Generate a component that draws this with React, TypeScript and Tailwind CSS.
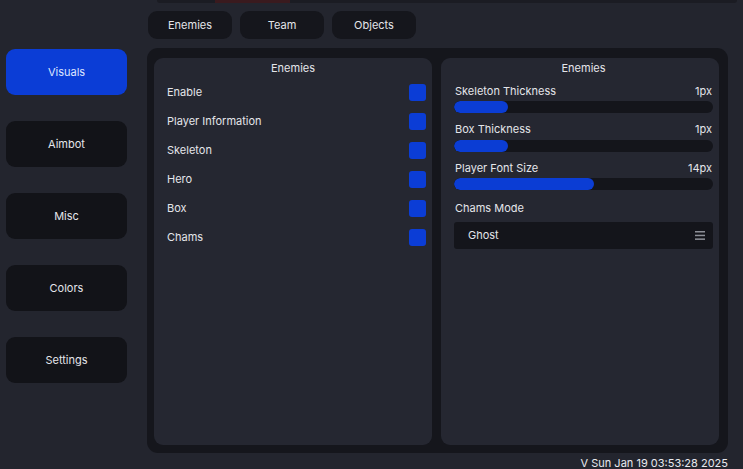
const sideItems = ['Visuals', 'Aimbot', 'Misc', 'Colors', 'Settings'];
const tabs = ['Enemies', 'Team', 'Objects'];
const toggles = ['Enable', 'Player Information', 'Skeleton', 'Hero', 'Box', 'Chams'];
const sliders = [
    { label: 'Skeleton Thickness', value: '1px', pct: 21 },
    { label: 'Box Thickness', value: '1px', pct: 21 },
    { label: 'Player Font Size', value: '14px', pct: 54 },
];

function Slider({ label, value, pct }: { label: string; value: string; pct: number }) {
    return (
        <div className="flex flex-col">
            <div className="flex justify-between items-center h-[16px] px-px">
                <span>{label}</span>
                <span>{value}</span>
            </div>
            <div className="mt-[2px] h-[12px] rounded-full bg-[#14151b] overflow-hidden">
                <div className="h-full rounded-full bg-[#0b3dd4]" style={{ width: `${pct}%` }} />
            </div>
        </div>
    );
}

export default function App() {
    return (
        <div
            className="relative w-[743px] h-[469px] bg-[#23252e] text-[#e4e5ea] text-[11px] overflow-hidden"
            style={{ fontFamily: 'Inter, "Noto Sans", sans-serif' }}
        >
            {/* strip of the window above */}
            <div className="absolute top-0 left-[157px] right-[6px] h-[3px] bg-[#1b1c23] rounded-b-[3px]">
                <div className="ml-[58px] w-[75px] h-full bg-[#3a1a1e]" />
            </div>

            <div className="flex">
                {/* Sidebar */}
                <div className="pl-[6px] pt-[49px] flex flex-col gap-[26px]">
                    {sideItems.map((item, i) => (
                        <div
                            key={item}
                            className={`w-[121px] h-[46px] rounded-[9px] flex items-center justify-center ${
                                i === 0 ? 'bg-[#0b3dd6] text-[#dfe6ff]' : 'bg-[#121318] text-[#e4e5ea]'
                            }`}
                        >
                            {item}
                        </div>
                    ))}
                </div>

                {/* Main */}
                <div className="ml-[20px] flex flex-col">
                    <div className="pt-[11px] pl-px flex gap-[8px]">
                        {tabs.map((tab) => (
                            <div
                                key={tab}
                                className="w-[84px] h-[28px] rounded-[9px] bg-[#15161c] flex items-center justify-center"
                            >
                                {tab}
                            </div>
                        ))}
                    </div>

                    <div className="mt-[9px] w-[581px] h-[405px] rounded-[11px] bg-[#15161c] pt-[10px] pb-[8px] pl-[7px] pr-[9px] flex gap-[9px]">
                        {/* Toggles */}
                        <div className="w-[278px] h-full rounded-[9px] bg-[#252731] flex flex-col">
                            <div className="text-center pt-[2px] h-[19px]">Enemies</div>
                            <div className="flex flex-col mt-[1px]">
                                {toggles.map((t) => (
                                    <div key={t} className="h-[29px] pl-[13px] pr-[6px] flex items-center justify-between">
                                        <span>{t}</span>
                                        <div className="w-[17px] h-[17px] rounded-[3px] bg-[#0b3dd6]" />
                                    </div>
                                ))}
                            </div>
                        </div>

                        {/* Sliders */}
                        <div className="w-[278px] h-full rounded-[9px] bg-[#252731] flex flex-col pl-[13px] pr-[6px]">
                            <div className="text-center pt-[2px] h-[19px]">Enemies</div>
                            <div className="flex flex-col gap-[8.5px] mt-[6px]">
                                {sliders.map((s) => (
                                    <Slider key={s.label} {...s} />
                                ))}
                            </div>
                            <div className="mt-[10px] h-[16px] flex items-center px-px">Chams Mode</div>
                            <div className="mt-[6px] h-[27px] rounded-[3px] bg-[#14151b] flex items-center justify-between pl-[14px] pr-[8px]">
                                <span>Ghost</span>
                                <svg width="10" height="9" viewBox="0 0 10 9" fill="#8d8f98">
                                    <rect x="0" y="0" width="10" height="1.5" />
                                    <rect x="0" y="3.7" width="10" height="1.5" />
                                    <rect x="0" y="7.4" width="10" height="1.5" />
                                </svg>
                            </div>
                        </div>
                    </div>

                    <div className="mt-[3px] text-right text-[11px] leading-[14px] text-[#e8e9ee]">
                        V Sun Jan 19 03:53:28 2025
                    </div>
                </div>
            </div>
        </div>
    );
}
